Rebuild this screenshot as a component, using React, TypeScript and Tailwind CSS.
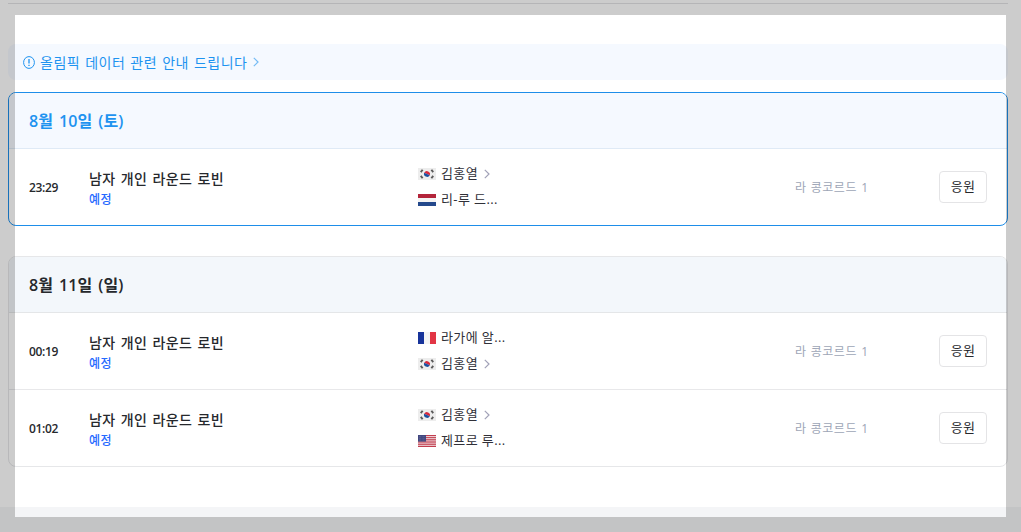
type Country = 'kr' | 'nl' | 'fr' | 'us';

type Player = {
  name: string;
  country: Country;
  link?: boolean;
};

type Match = {
  time: string;
  title: string;
  place: string;
  players: Player[];
};

const today: Match[] = [
  {
    time: '23:29',
    title: '남자 개인 라운드 로빈',
    place: '라 콩코르드 1',
    players: [
      { name: '김홍열', country: 'kr', link: true },
      { name: '리-루 드...', country: 'nl' },
    ],
  },
];

const tomorrow: Match[] = [
  {
    time: '00:19',
    title: '남자 개인 라운드 로빈',
    place: '라 콩코르드 1',
    players: [
      { name: '라가에 알...', country: 'fr' },
      { name: '김홍열', country: 'kr', link: true },
    ],
  },
  {
    time: '01:02',
    title: '남자 개인 라운드 로빈',
    place: '라 콩코르드 1',
    players: [
      { name: '김홍열', country: 'kr', link: true },
      { name: '제프로 루...', country: 'us' },
    ],
  },
];

function Chevron({ className }: { className: string }) {
  return (
    <svg viewBox="0 0 6 10" className={className} fill="none" stroke="currentColor" strokeWidth="1.2">
      <path d="M0.8 0.8L5 5L0.8 9.2" />
    </svg>
  );
}

function Flag({ country }: { country: Country }) {
  return (
    <svg viewBox="0 0 18 12" className="h-3 w-[18px] shrink-0">
      {country === 'kr' && (
        <>
          <rect width="18" height="12" fill="#ededed" />
          <path d="M6.2 4.7A3.1 3.1 0 0 1 11.8 7.3Z" fill="#d8283c" />
          <path d="M6.2 4.7A3.1 3.1 0 0 0 11.8 7.3Z" fill="#1b4fa0" />
          <g stroke="#5a5a5a" strokeWidth="1.9">
            <path d="M2.8 4.1L4.6 1.7" />
            <path d="M13.4 1.7L15.2 4.1" />
            <path d="M2.8 7.9L4.6 10.3" />
            <path d="M13.4 10.3L15.2 7.9" />
          </g>
        </>
      )}
      {country === 'nl' && (
        <>
          <rect width="18" height="12" fill="#f4f4f4" />
          <rect width="18" height="4" fill="#b3243a" />
          <rect y="8" width="18" height="4" fill="#24498c" />
        </>
      )}
      {country === 'fr' && (
        <>
          <rect width="18" height="12" fill="#f4f4f4" />
          <rect width="6" height="12" fill="#17339a" />
          <rect x="12" width="6" height="12" fill="#e23545" />
        </>
      )}
      {country === 'us' && (
        <>
          <rect width="18" height="12" fill="#f1dfe2" />
          <path d="M0 .5H18M0 2.4H18M0 4.3H18M0 6.1H18M0 7.9H18M0 9.7H18M0 11.5H18" stroke="#bf3547" strokeWidth="0.95" />
          <rect width="8" height="6.6" fill="#41477f" />
          <path d="M1 1.6H7.5M1 3.3H7.5M1 5H7.5" stroke="#8d91b8" strokeWidth="0.5" strokeDasharray="0.6 0.8" />
        </>
      )}
    </svg>
  );
}

function MatchRow({ match }: { match: Match }) {
  return (
    <li className="box-content flex h-[76px] items-center">
      <span className="ml-5 w-[60px] pt-px text-[12px] font-semibold tracking-[-0.35px] text-[#26282c]">{match.time}</span>
      <div className="w-[329px] pt-[3px]">
        <p className="text-[14px] font-medium leading-[21px] tracking-[0.35px] text-[#26282c] [word-spacing:1.3px]">
          {match.title}
        </p>
        <p className="pt-px text-[12px] font-medium leading-5 tracking-[0.5px] text-[#256aff]">예정</p>
      </div>
      <ul className="w-[377px]">
        {match.players.map((player) => (
          <li key={player.name} className="flex h-[26px] items-center text-[13px] text-[#303038]">
            <Flag country={player.country} />
            <span className="ml-[5px] tracking-[0.4px]">{player.name}</span>
            {player.link && <Chevron className="ml-1.5 h-2.5 w-1.5 text-[#a2a2b8]" />}
          </li>
        ))}
      </ul>
      <span className="pt-px text-[12px] tracking-[0.5px] text-[#9da5b6] [word-spacing:0.6px]">{match.place}</span>
      <button className="ml-auto mr-5 h-8 w-12 rounded border border-[#e4e4e6] bg-white text-[13px] tracking-[0.3px] text-[#26282c]">
        응원
      </button>
    </li>
  );
}

function DayCard({ date, matches, active }: { date: string; matches: Match[]; active?: boolean }) {
  return (
    <section className={`overflow-hidden rounded-lg border ${active ? 'border-[#1e8ee9]' : 'border-[#e6e7e9]'}`}>
      <h2
        className={`flex h-14 items-center border-b pl-5 text-[16px] font-semibold tracking-[0.1px] [word-spacing:1.7px] ${
          active ? 'border-[#dfeaf6] bg-[#f5f9ff] text-[#1e93f0]' : 'border-[#e4e6e8] bg-[#f3f7fb] text-[#26282c]'
        }`}
      >
        {date}
      </h2>
      <ul className="divide-y divide-[#e8e8ea]">
        {matches.map((match) => (
          <MatchRow key={match.time} match={match} />
        ))}
      </ul>
    </section>
  );
}

export default function App() {
  return (
    <div className="relative flex h-[532px] w-[1021px] flex-col overflow-hidden bg-white font-['Open_Sans','Noto_Sans_CJK_KR',sans-serif]">
      <main className="ml-2 w-[1000px] grow pt-[3px]">
        <div className="border-t border-[#e3e3e5] pt-10">
          <a href="#" className="flex h-9 items-center rounded-lg bg-[#f5f9ff] pl-[15px] text-[14px] text-[#1e93f0]">
            <svg viewBox="0 0 12 13" className="h-[13px] w-3" fill="none" stroke="currentColor">
              <ellipse cx="6" cy="6.5" rx="5.4" ry="5.9" />
              <path d="M6 3V7.6M6 8.8V10" strokeWidth="1.3" />
            </svg>
            <span className="ml-[5px] tracking-[0.5px] [word-spacing:0.9px]">올림픽 데이터 관련 안내 드립니다</span>
            <Chevron className="ml-1.5 h-2.5 w-1.5 opacity-60" />
          </a>
        </div>
        <div className="mt-3 flex flex-col gap-[30px]">
          <DayCard date="8월 10일 (토)" matches={today} active />
          <DayCard date="8월 11일 (일)" matches={tomorrow} />
        </div>
      </main>
      <footer className="h-[25px] bg-[#f4f5f7]" />
      {/* dimmed frame around the selected area */}
      <div className="pointer-events-none absolute inset-0 border-[15px] border-black/20" />
    </div>
  );
}
